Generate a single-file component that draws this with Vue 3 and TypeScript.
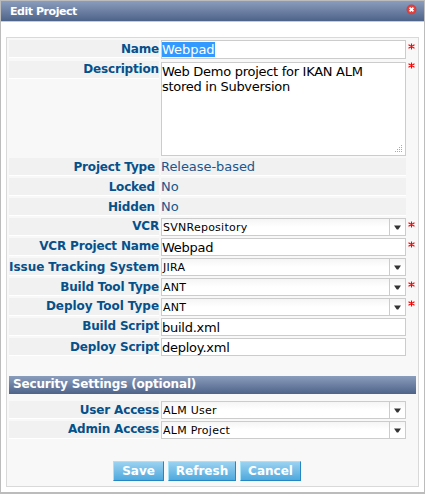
<script setup lang="ts">
import { ref } from 'vue'

type Kind = 'input' | 'area' | 'static' | 'select'
interface Field {
  label: string
  value: string
  kind: Kind
  required?: boolean
  selected?: boolean
  low?: boolean
  wide?: boolean
}

const project = ref<Field[]>([
  { label: 'Name', value: 'Webpad', kind: 'input', required: true, selected: true, low: true },
  { label: 'Description', value: 'Web Demo project for IKAN ALM stored in Subversion', kind: 'area', required: true },
  { label: 'Project Type', value: 'Release-based', kind: 'static' },
  { label: 'Locked', value: 'No', kind: 'static' },
  { label: 'Hidden', value: 'No', kind: 'static' },
  { label: 'VCR', value: 'SVNRepository', kind: 'select', required: true },
  { label: 'VCR Project Name', value: 'Webpad', kind: 'input', required: true },
  { label: 'Issue Tracking System', value: 'JIRA', kind: 'select', low: true, wide: true },
  { label: 'Build Tool Type', value: 'ANT', kind: 'select', required: true, low: true },
  { label: 'Deploy Tool Type', value: 'ANT', kind: 'select', required: true, wide: true },
  { label: 'Build Script', value: 'build.xml', kind: 'input' },
  { label: 'Deploy Script', value: 'deploy.xml', kind: 'input', low: true },
])
const security = ref<Field[]>([
  { label: 'User Access', value: 'ALM User', kind: 'select', low: true },
  { label: 'Admin Access', value: 'ALM Project', kind: 'select' },
])
const groups = [
  { title: '', fields: project },
  { title: 'Security Settings (optional)', fields: security },
]
const actions = ['Save', 'Refresh', 'Cancel']
</script>

<template>
  <div class="dialog">
    <header class="titlebar">
      <span class="title">Edit Project</span>
      <svg class="close" width="11" height="11" viewBox="0 0 11 11">
        <circle cx="5.5" cy="5.5" r="5" fill="#b9464c" />
        <circle cx="5.5" cy="5.5" r="4.2" fill="#e8403c" />
        <path d="M3.6 3.6 7.4 7.4M7.4 3.6 3.6 7.4" stroke="#fff" stroke-width="1.8" />
      </svg>
    </header>
    <main class="panel">
      <section v-for="(group, g) in groups" :key="g" class="group">
        <h2 v-if="group.title" class="section"><span>{{ group.title }}</span></h2>
        <div
          v-for="field in group.fields.value"
          :key="field.label"
          class="row"
          :class="[field.kind, { low: field.low, first: field.selected, wide: field.wide }]"
        >
          <div class="label"><span>{{ field.label }}</span></div>
          <div class="control">
            <span class="value" :class="{ selected: field.selected }">{{ field.value }}</span>
            <span v-if="field.kind === 'select'" class="arrow">
              <svg width="7" height="5" viewBox="0 0 7 5"><path d="M0 .5h7L4.2 4.6H2.8Z" fill="#333" /></svg>
            </span>
            <svg v-if="field.kind === 'area'" class="grip" width="8" height="8" viewBox="0 0 8 8">
              <path d="M7 0h1v1h-1zM5 2h1v1h-1zM7 2h1v1h-1zM3 4h1v1h-1zM5 4h1v1h-1zM7 4h1v1h-1zM1 6h1v1h-1zM3 6h1v1h-1zM5 6h1v1h-1zM7 6h1v1h-1z" fill="#aaa" />
            </svg>
          </div>
          <div class="mark">
            <svg v-if="field.required" width="7" height="7" viewBox="0 0 7 7">
              <path d="M3.5 .5v6M.5 1.8l6 3.4M6.5 1.8l-6 3.4" stroke="#f00" stroke-width="1.1" />
            </svg>
          </div>
        </div>
      </section>
      <footer class="actions">
        <button v-for="action in actions" :key="action" :class="action.toLowerCase()">{{ action }}</button>
      </footer>
    </main>
  </div>
</template>

<style>
body { background: #fff; }
</style>

<style scoped>
* { box-sizing: border-box; }
.dialog {
  width: 425px;
  height: 494px;
  border: 1px solid #bcbcbc;
  border-bottom: 2px solid #bcbcbc;
  font-family: "DejaVu Sans", sans-serif;
  font-size: 13px;
  background: #fff;
}
.titlebar {
  display: flex;
  justify-content: space-between;
  height: 21px;
  padding: 3px 7px 0 9px;
  border-bottom: 1px solid #ccc;
  background: linear-gradient(#8b9dbd, #4e6389);
}
.title {
  color: #fff;
  font-size: 11px;
  font-weight: bold;
  line-height: 15px;
  letter-spacing: -0.45px;
}
.panel {
  width: 413px;
  height: 450px;
  margin: 15px 0 0 5px;
  padding: 2px;
  border: 1px solid #d9d9d9;
  background: #f8f8f8;
}
.row {
  display: grid;
  grid-template-columns: 150px 2px 245px 2px 8px;
  height: 20px;
}
.row.first { height: 22px; }
.row.area { height: 96px; }
.label {
  grid-column: 1;
  height: 18px;
  border-bottom: 1px solid #fff;
  background: #f1f1f1;
  color: #06508a;
  font-weight: bold;
  font-size: 12px;
  line-height: 16px;
  letter-spacing: -0.17px;
  text-align: right;
  white-space: nowrap;
}
.label span { display: inline-block; }
.wide .label { letter-spacing: -0.04px; }
.low .label { line-height: 18px; }
.static .label { padding-right: 4px; line-height: 18px; }
.area .label { margin-top: -1px; line-height: 17px; }
.control {
  grid-column: 3;
  display: flex;
  height: 18px;
  border: 1px solid #ccc;
  background: #fff;
  color: #000;
  line-height: 18px;
}
.first .control { height: 19px; }
.area .control { position: relative; height: 94px; line-height: 15px; padding-top: 1px; }
.static .control {
  border: 0;
  border-bottom: 1px solid #fff;
  background: #f1f1f1;
  color: #20568c;
}
.value { flex: 1; letter-spacing: -0.25px; }
.area .value { letter-spacing: -0.28px; }
.static .value { letter-spacing: -0.05px; }
.value.selected {
  flex: none;
  height: 15px;
  margin-top: 1px;
  line-height: 15px;
  letter-spacing: -0.05px;
  background: #3399ff;
  color: #fff;
}
.select .control { background: linear-gradient(#f5f5f5, #fff 8px); }
.select .value { padding-left: 1px; font-size: 11px; letter-spacing: 0.25px; }
.arrow {
  display: flex;
  align-items: center;
  justify-content: center;
  width: 16px;
  padding-top: 1px;
  border-left: 1px solid #ccc;
}
.grip { position: absolute; right: 3px; bottom: 2px; }
.mark { grid-column: 5; display: flex; padding-top: 3px; }
.area .mark { padding-top: 0; }
.wide .mark { padding-top: 2px; }
.section {
  height: 18px;
  margin: 18px 0 7px;
  padding-left: 4px;
  background: linear-gradient(#8b9dbd, #4e6389);
  color: #fff;
  font-size: 12px;
  line-height: 17px;
  letter-spacing: -0.16px;
}
.actions { display: flex; gap: 4px; padding: 20px 0 0 104px; }
.actions button {
  width: 51px;
  height: 20px;
  padding: 0;
  border: 1px solid;
  border-color: #a6e2f8 #2487c4 #2487c4 #a6e2f8;
  background: linear-gradient(#9bd2f0, #4ea9de);
  color: #fff;
  font: bold 12px/17px "DejaVu Sans", sans-serif;
}
.actions .refresh { width: 68px; }
.actions .cancel { width: 61px; }
</style>
